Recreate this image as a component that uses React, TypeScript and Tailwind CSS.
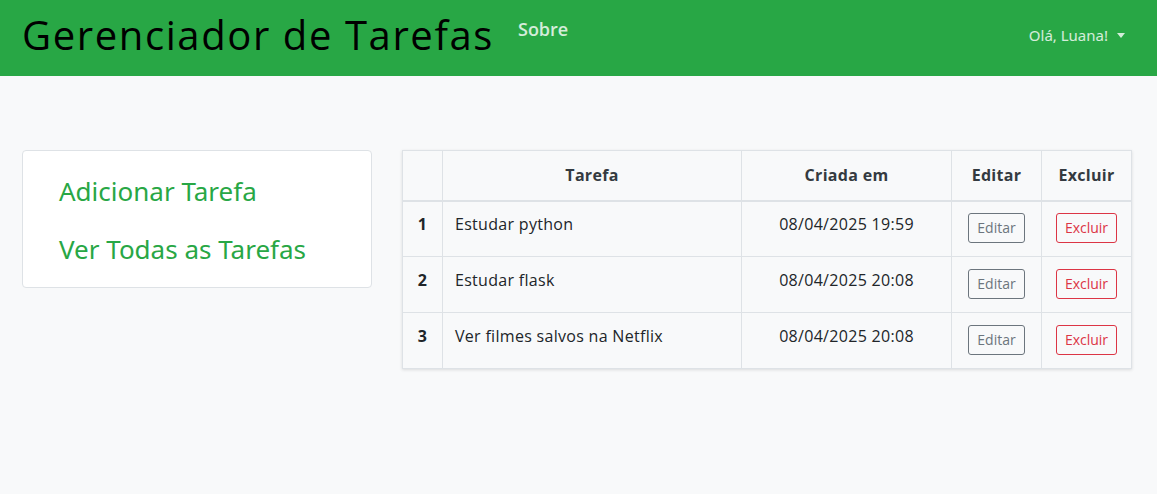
import React from "react";

const tasks = [
  { id: 1, title: "Estudar python", created: "08/04/2025 19:59" },
  { id: 2, title: "Estudar flask", created: "08/04/2025 20:08" },
  { id: 3, title: "Ver filmes salvos na Netflix", created: "08/04/2025 20:08" },
];

const poppins = { fontFamily: '"Open Sans", "Noto Sans", sans-serif' };

export default function App() {
  return (
    <div className="min-h-[494px] bg-[#f8f9fa]" style={poppins}>
      {/* navbar */}
      <nav className="flex h-[76px] items-center bg-[#28a745] px-[22px]">
        <span className="text-[40px] leading-none tracking-[1.6px] text-black pb-[6px]">Gerenciador de Tarefas</span>
        <a className="ml-[24px] mb-[18px] text-[18px] font-semibold text-white/80">Sobre</a>
        <div className="ml-auto mr-[10px] mb-[6px] flex items-center gap-[9px] text-[15px] text-white/80 font-['Noto_Sans',sans-serif]">
          <span>Olá, Luana!</span>
          <span className="h-0 w-0 border-x-[4px] border-t-[5px] border-x-transparent border-t-white/80" />
        </div>
      </nav>

      <div className="flex items-start gap-[30px] px-[22px] pt-[74px]">
        {/* side menu */}
        <div className="w-[350px] rounded-[4px] border border-[#dee2e6] bg-white px-[36px] pt-[22px] pb-[20px] font-['Noto_Sans',sans-serif]">
          <a className="block text-[26px] leading-[36px] text-[#28a745]">Adicionar Tarefa</a>
          <a className="mt-[22px] block text-[26px] leading-[36px] text-[#28a745]">Ver Todas as Tarefas</a>
        </div>

        {/* tasks table */}
        <table className="w-[730px] border-collapse bg-[#f8f9fa] text-[16px] tracking-[0.3px] text-[#212529] shadow-[0_1px_3px_rgba(0,0,0,0.12)]">
          <thead>
            <tr className="h-[50px] border-b-2 border-[#dee2e6]">
              <th className="w-[40px] border border-[#dee2e6]"></th>
              <th className="w-[299px] border border-[#dee2e6] font-bold text-[#343a40]">Tarefa</th>
              <th className="w-[210px] border border-[#dee2e6] font-bold text-[#343a40]">Criada em</th>
              <th className="w-[90px] border border-[#dee2e6] font-bold text-[#343a40]">Editar</th>
              <th className="border border-[#dee2e6] font-bold text-[#343a40]">Excluir</th>
            </tr>
          </thead>
          <tbody>
            {tasks.map((t) => (
              <tr key={t.id} className="h-[56px]">
                <td className="border border-[#dee2e6] pb-[10px] text-center font-bold">{t.id}</td>
                <td className="border border-[#dee2e6] px-[12px] pb-[10px]">{t.title}</td>
                <td className="border border-[#dee2e6] pb-[10px] text-center">{t.created}</td>
                <td className="border border-[#dee2e6] pb-[2px] text-center">
                  <button className="h-[30px] w-[57px] rounded-[3px] border border-[#6c757d] text-[14px] tracking-normal text-[#6c757d]">Editar</button>
                </td>
                <td className="border border-[#dee2e6] pb-[2px] text-center">
                  <button className="h-[30px] w-[61px] rounded-[3px] border border-[#dc3545] text-[14px] tracking-normal text-[#dc3545]">Excluir</button>
                </td>
              </tr>
            ))}
          </tbody>
        </table>
      </div>
    </div>
  );
}
